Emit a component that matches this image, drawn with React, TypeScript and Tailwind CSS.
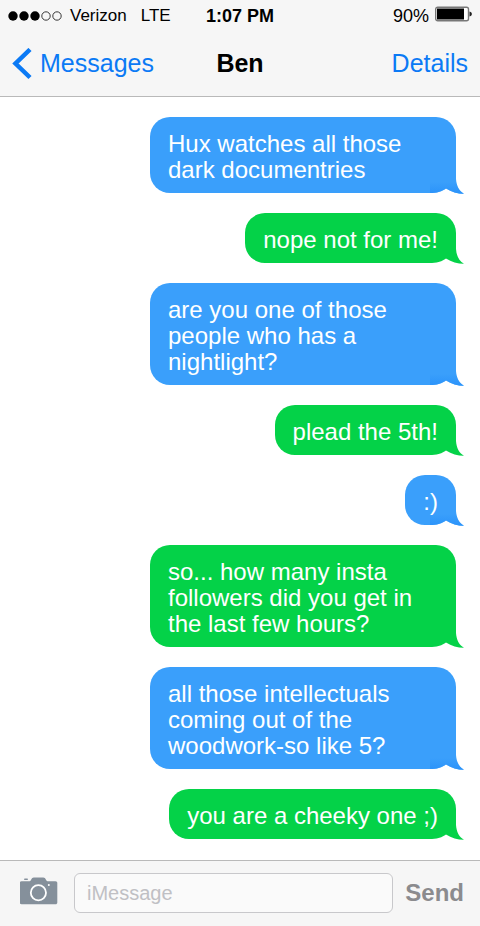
import React, { useState } from 'react';

type Tone = 'blue' | 'green';

interface Message {
  id: number;
  tone: Tone;
  text: string;
}

const messages: Message[] = [
  { id: 1, tone: 'blue', text: 'Hux watches all those dark documentries' },
  { id: 2, tone: 'green', text: 'nope not for me!' },
  { id: 3, tone: 'blue', text: 'are you one of those people who has a nightlight?' },
  { id: 4, tone: 'green', text: 'plead the 5th!' },
  { id: 5, tone: 'blue', text: ':)' },
  { id: 6, tone: 'green', text: 'so... how many insta followers did you get in the last few hours?' },
  { id: 7, tone: 'blue', text: 'all those intellectuals coming out of the woodwork-so like 5?' },
  { id: 8, tone: 'green', text: 'you are a cheeky one ;)' },
];

const Signal = () => (
  <svg width="54" height="10" viewBox="0 0 54 10" aria-hidden="true">
    {[0, 1, 2, 3, 4].map((n) => (
      <circle
        key={n}
        cx={5 + n * 11}
        cy="5"
        r={n < 3 ? 4.7 : 4.2}
        fill={n < 3 ? '#000' : 'none'}
        stroke={n < 3 ? 'none' : '#222'}
        strokeWidth="0.9"
      />
    ))}
  </svg>
);

const Battery = () => (
  <svg className="mb-1" width="37" height="16" viewBox="0 0 37 16" aria-hidden="true">
    <rect x="0.7" y="1.2" width="32.8" height="13.6" rx="2" fill="#fff" stroke="#777" strokeWidth="1.4" />
    <rect x="2" y="2.5" width="27" height="11" fill="#000" />
    <path d="M34.5 5.5c1.8.4 2.3 1.2 2.3 2.5s-.5 2.1-2.3 2.5z" fill="#222" />
  </svg>
);

const Camera = () => (
  <svg width="38" height="28" viewBox="0 0 38 28" aria-hidden="true">
    <path
      d="M1.5 4.3h7.3c1.3 0 1.700-.5 2.300-1.600C11.900 1.200 12.500.500 13.800.500h9.400c1.400 0 2 .7 2.800 2.200.6 1.100 1.100 1.600 2.500 1.600h7c1.200 0 1.800.7 1.800 1.700v19.500c0 1.100-.7 1.800-1.800 1.800h-34c-1.100 0-1.700-.7-1.700-1.800V6c0-1 .6-1.700 1.700-1.700z"
      fill="#85909b"
    />
    <rect x="4" y="1.4" width="4" height="1.7" rx="0.8" fill="#85909b" />
    <circle cx="18.400" cy="15.700" r="7.600" fill="none" stroke="#fff" strokeWidth="1.800" />
    <circle cx="28.800" cy="8" r="1" fill="#fff" />
  </svg>
);

const Tail = ({ tone }: { tone: Tone }) => (
  <svg className="absolute -right-2 -bottom-px" width="36" height="28" viewBox="0 0 36 28" aria-hidden="true">
    <path
      d="M18 22.5V3H28V13C28.500 20 31 25 36 27.700C29.500 27.700 23.500 26 18 22.500Z"
      fill={tone === 'blue' ? '#3a9ffb' : '#04d248'}
    />
    {tone === 'blue' && (
      <>
        <defs>
          <linearGradient id="tail" x1="0" y1="0" x2="0" y2="1">
            <stop offset="0" stopColor="#2b93fa" stopOpacity="0" />
            <stop offset="1" stopColor="#2b93fa" />
          </linearGradient>
        </defs>
        <path d="M2 16H28.300C29.300 21 31.500 25.300 36 27.700C29.500 27.700 23.500 26 18 22.500C13 25.800 9 27 2 27Z" fill="url(#tail)" />
      </>
    )}
  </svg>
);

const Bubble = ({ message }: { message: Message }) => (
  <li
    className={`relative max-w-[306px] rounded-[20px] rounded-br-[24px] px-[18px] pt-[14px] pb-[10px] text-2xl leading-[26px] text-white ${
      message.tone === 'blue' ? 'bg-[#3a9ffb]' : 'bg-[#04d248]'
    }`}
  >
    <Tail tone={message.tone} />
    <span className="relative">{message.text}</span>
  </li>
);

const App: React.FC = () => {
  const [draft, setDraft] = useState('');

  return (
    <div className="flex min-h-screen flex-col bg-white font-['Liberation_Sans',Arial,sans-serif] text-black">
      <header className="border-b border-[#b9b9b9] bg-[#f6f6f6]">
        {/* Status bar */}
        <div className="grid h-8 grid-cols-[1fr_auto_1fr] items-center px-2 text-lg">
          <div className="flex items-center gap-2 text-[17px]">
            <Signal />
            <span>Verizon</span>
            <span className="pl-1.5">LTE</span>
          </div>
          <span className="font-bold">1:07 PM</span>
          <div className="flex items-center justify-end gap-1.5">
            <span>90%</span>
            <Battery />
          </div>
        </div>

        {/* Navigation */}
        <nav className="grid h-16 grid-cols-[1fr_auto_1fr] items-center px-3 text-[25px] text-[#0b7af5]">
          <a href="#messages" className="flex items-center gap-2">
            <svg width="20" height="32" viewBox="0 0 20 32" fill="none" stroke="currentColor" strokeWidth="4.5" aria-hidden="true">
              <path d="M18 1.5L3.500 15.500L18 29.500" />
            </svg>
            Messages
          </a>
          <h1 className="font-bold text-black">Ben</h1>
          <a href="#details" className="justify-self-end">Details</a>
        </nav>
      </header>

      <main className="flex-1 px-6 py-5">
        <ul className="flex flex-col items-end gap-5">
          {messages.map((m) => (
            <Bubble key={m.id} message={m} />
          ))}
        </ul>
      </main>

      <form
        className="flex items-center gap-3 border-t border-[#b9b9b9] bg-[#f6f6f6] pt-3 pr-4 pb-[13px] pl-5"
        onSubmit={(e) => e.preventDefault()}
      >
        <button type="button" aria-label="Camera" className="mr-1 pb-1">
          <Camera />
        </button>
        <input
          aria-label="Message"
          placeholder="iMessage"
          value={draft}
          onChange={(e) => setDraft(e.target.value)}
          className="h-10 min-w-0 flex-1 rounded-md border border-[#c8c8cb] bg-[#fafafa] px-3 text-xl placeholder:text-[#c0c0c4]"
        />
        <button type="submit" className="text-2xl font-bold text-[#8b8b8e]">Send</button>
      </form>
    </div>
  );
};

export default App;
